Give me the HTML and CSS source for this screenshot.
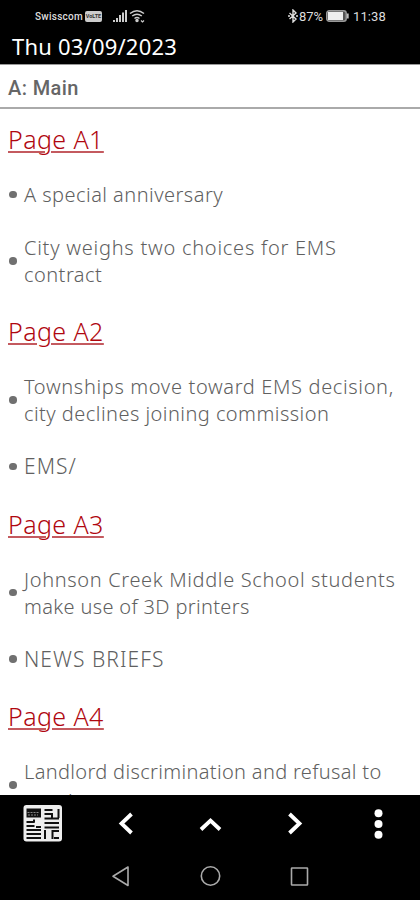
FILE: index.html
```
<!DOCTYPE html>
<html lang="en">
<head>
<meta charset="utf-8">
<title>Thu 03/09/2023</title>
<link rel="stylesheet" href="styles.css">
</head>
<body>
<div class="status">
  <span class="carrier">Swisscom</span>
  <span class="volte">VoLTE</span>
  <svg class="signal" width="14" height="14" viewBox="0 0 14 14"><path d="M1 13v-2M4 13V9M7 13V6M10 13V3.500M13 13V1" stroke="#ccc" stroke-width="2"/></svg>
  <svg class="wifi" width="16" height="14" viewBox="0 0 16 14" fill="none" stroke="#ccc" stroke-width="1.500"><path d="M1 4.500Q8-1 15 4.500M3.200 7Q8 3.300 12.800 7M5.500 9.500Q8 7.500 10.500 9.500"/><circle cx="8" cy="11.500" r="1" fill="#ccc"/><path d="M12 11.500l1.500 1.500 1.500-1.500" stroke-width="1.200"/></svg>
  <svg class="bt" width="10" height="14" viewBox="0 0 10 14" fill="none" stroke="#ddd" stroke-width="1.400"><path d="M1.500 4l6.500 6-3 3V1l3 3-6.500 6M0 7h2M8 7h2"/></svg>
  <span class="percent">87%</span>
  <svg class="battery" width="23" height="12" viewBox="0 0 23 12"><rect x=".7" y=".7" width="19.500" height="10.600" rx="2.500" fill="#555" stroke="#999" stroke-width="1.400"/><rect x="2" y="2" width="15" height="8" fill="#eee"/><path d="M21.700 3.500v5" stroke="#bbb" stroke-width="2"/></svg>
  <span class="clock">11:38</span>
</div>
<header class="date">Thu 03/09/2023</header>
<div class="section">A: Main</div>
<main class="list">
  <h2>Page A1</h2>
  <ul>
    <li><span class="fit-m">A special anniversary</span></li>
    <li><span class="fit-xl">City weighs two choices for EMS</span><span class="fit-m">contract</span></li>
  </ul>
  <h2>Page A2</h2>
  <ul>
    <li><span class="fit-l">Townships move toward EMS decision,</span><span class="fit-m">city declines joining commission</span></li>
    <li><span class="fit-caps">EMS/</span></li>
  </ul>
  <h2>Page A3</h2>
  <ul>
    <li><span class="fit-l">Johnson Creek Middle School students</span><span class="fit-s">make use of 3D printers</span></li>
    <li><span class="fit-caps">NEWS BRIEFS</span></li>
  </ul>
  <h2>Page A4</h2>
  <ul>
    <li><span class="fit-s">Landlord discrimination and refusal to</span><span class="clipped">rent housing at</span></li>
  </ul>
</main>
<nav class="toolbar">
  <svg width="84" height="56" viewBox="0 0 84 56"><rect x="23.500" y="10" width="38.500" height="36.500" rx="3" fill="#eee"/><path d="M26.500 13.500h14.500v9h-14.500z" fill="#111"/><path d="M27.500 17.500h12M28 20h10" stroke="#888" stroke-dasharray="2 1"/><path d="M26.500 27h8M26.500 31h8M26.500 35h14.500M26.500 39h14.500M26.500 43h14.500M34 24.500v3M36 32h5M44.500 15h8M44.500 19h8M44.500 23.500h14.500M52 18v5M58.500 14v9M44.500 28h14.500M44.500 32.500h14.500M45 35v9M52.500 35v9M52 36h7M54 43h5" stroke="#111" stroke-width="2" fill="none"/></svg>
  <svg width="84" height="56" viewBox="0 0 84 56"><path d="M47.500 19l-10 9.500 10 9.500" fill="none" stroke="#fff" stroke-width="3.800"/></svg>
  <svg width="84" height="56" viewBox="0 0 84 56"><path d="M33 34.500l9.500-9 9.500 9" fill="none" stroke="#fff" stroke-width="3.800"/></svg>
  <svg width="84" height="56" viewBox="0 0 84 56"><path d="M37.500 19l10 9.500-10 9.500" fill="none" stroke="#fff" stroke-width="3.800"/></svg>
  <svg width="84" height="56" viewBox="0 0 84 56" fill="#fff"><circle cx="42.500" cy="18.300" r="4"/><circle cx="42.500" cy="29" r="4"/><circle cx="42.500" cy="39.700" r="4"/></svg>
</nav>
<nav class="system">
  <svg width="420" height="49" viewBox="0 0 420 49" fill="none" stroke="#aaa" stroke-width="1.600"><path d="M128 16v18.500L113 25.300z" stroke-linejoin="round"/><circle cx="210.500" cy="25" r="9.200"/><rect x="291.500" y="17" width="16" height="17" rx=".5"/></svg>
</nav>
</body>
</html>
```

FILE: styles.css
```
* { box-sizing: border-box; }
body {
  margin: 0;
  width: 420px;
  height: 900px;
  overflow: hidden;
  display: flex;
  flex-direction: column;
  background: #fff;
  font-family: "Noto Sans", sans-serif;
}
svg { display: block; flex: none; }
.status {
  height: 32px;
  flex: none;
  display: flex;
  align-items: center;
  padding-left: 35px;
  background: #000;
  color: #ddd;
  font-family: Roboto, sans-serif;
}
.carrier { font-size: 10px; font-weight: 500; width: 50px; letter-spacing: .25px; }
.volte {
  width: 17px;
  height: 11px;
  border-radius: 2px;
  background: #ccc;
  color: #333;
  font-size: 5.500px;
  font-weight: 700;
  line-height: 11px;
  text-align: center;
}
.signal { margin-left: 11px; }
.wifi { margin-left: 2px; }
.bt { margin-left: 143px; }
.percent { width: 26px; margin-left: 1px; font-size: 13px; letter-spacing: -.1px; }
.battery { margin-left: 1px; }
.clock { margin-left: 4px; font-size: 13px; letter-spacing: .1px; }
.date {
  height: 32px;
  flex: none;
  padding-left: 12px;
  background: #000;
  color: #fff;
  font-size: 22px;
  letter-spacing: .2px;
  line-height: 29px;
}
.section {
  height: 45px;
  flex: none;
  padding-left: 8px;
  border-top: 1px solid #999;
  border-bottom: 2px solid #aaa;
  color: #666;
  font-family: Roboto, sans-serif;
  font-size: 20px;
  font-weight: 500;
  letter-spacing: .4px;
  line-height: 46px;
}
.list {
  height: 686px;
  flex: none;
  overflow: hidden;
  padding-top: 14px;
}
h2 {
  margin: 0;
  padding-left: 8px;
  height: 32px;
  color: #b0070f;
  font-size: 25px;
  font-weight: 300;
  letter-spacing: .42px;
  line-height: 32px;
  text-decoration: underline;
  text-decoration-color: #c45a5f;
  text-decoration-thickness: 1.500px;
  text-underline-offset: 2px;
}
ul {
  display: flex;
  flex-direction: column;
  gap: 26px;
  margin: 0;
  padding: 26.200px 0 27.100px 24px;
  list-style: none;
}
li {
  position: relative;
  color: #606060;
  font-size: 20px;
  font-weight: 300;
  line-height: 27px;
  white-space: nowrap;
}
li span { display: block; }
.fit-s { letter-spacing: .34px; }
.fit-m { letter-spacing: .46px; }
.fit-l { letter-spacing: .65px; }
.fit-xl { letter-spacing: .75px; }
.fit-caps { font-size: 21px; letter-spacing: 1.050px; }
.clipped { padding-top: 3px; margin-bottom: -3px; letter-spacing: .3px; }
li::before {
  content: "";
  position: absolute;
  left: -15px;
  top: calc(50% - 4px);
  width: 7.500px;
  height: 7.500px;
  border-radius: 50%;
  background: #707070;
}
.toolbar {
  height: 56px;
  flex: none;
  display: flex;
  background: #000;
}
.system { height: 49px; flex: none; background: #000; }
```
